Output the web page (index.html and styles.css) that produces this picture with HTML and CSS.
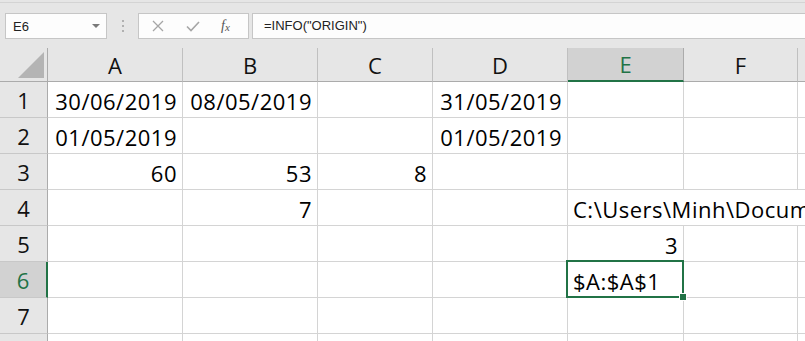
FILE: index.html
```html
<!DOCTYPE html>
<html lang="en">
<head>
    <meta charset="utf-8">
    <title>INFO ORIGIN</title>
    <link rel="stylesheet" href="styles.css">
</head>
<body>
<div class="toolbar">
    <div class="name-box">
        <span>E6</span>
        <span class="caret"></span>
    </div>
    <div class="grip"><i></i><i></i><i></i></div>
    <div class="fx-box">
        <svg width="14" height="14" viewBox="0 0 14 14"><path d="M2 2 L12 12 M12 2 L2 12" stroke="#a6a6a6" stroke-width="1.3" fill="none"/></svg>
        <svg width="16" height="14" viewBox="0 0 16 14"><path d="M2 7.5 L6 11.5 L14 3" stroke="#a6a6a6" stroke-width="1.6" fill="none"/></svg>
        <span class="fx">f<sub>x</sub></span>
    </div>
    <div class="formula">=INFO("ORIGIN")</div>
</div>

<div class="sheet">
    <div class="hdr corner"><span class="tri"></span></div>
    <div class="hdr col">A</div>
    <div class="hdr col">B</div>
    <div class="hdr col">C</div>
    <div class="hdr col">D</div>
    <div class="hdr col active">E</div>
    <div class="hdr col">F</div>
    <div class="hdr col"></div>

    <div class="hdr row">1</div>
    <div class="cell num">30/06/2019</div>
    <div class="cell num">08/05/2019</div>
    <div class="cell"></div>
    <div class="cell num">31/05/2019</div>
    <div class="cell"></div>
    <div class="cell"></div>
    <div class="cell"></div>

    <div class="hdr row">2</div>
    <div class="cell num">01/05/2019</div>
    <div class="cell"></div>
    <div class="cell"></div>
    <div class="cell num">01/05/2019</div>
    <div class="cell"></div>
    <div class="cell"></div>
    <div class="cell"></div>

    <div class="hdr row">3</div>
    <div class="cell num">60</div>
    <div class="cell num">53</div>
    <div class="cell num">8</div>
    <div class="cell"></div>
    <div class="cell"></div>
    <div class="cell"></div>
    <div class="cell"></div>

    <div class="hdr row">4</div>
    <div class="cell"></div>
    <div class="cell num">7</div>
    <div class="cell"></div>
    <div class="cell"></div>
    <div class="cell text span3">C:\Users\Minh\Docum</div>

    <div class="hdr row">5</div>
    <div class="cell"></div>
    <div class="cell"></div>
    <div class="cell"></div>
    <div class="cell"></div>
    <div class="cell num">3</div>
    <div class="cell"></div>
    <div class="cell"></div>

    <div class="hdr row active">6</div>
    <div class="cell"></div>
    <div class="cell"></div>
    <div class="cell"></div>
    <div class="cell"></div>
    <div class="cell text selected">$A:$A$1</div>
    <div class="cell"></div>
    <div class="cell"></div>

    <div class="hdr row">7</div>
    <div class="cell"></div>
    <div class="cell"></div>
    <div class="cell"></div>
    <div class="cell"></div>
    <div class="cell"></div>
    <div class="cell"></div>
    <div class="cell"></div>

    <div class="hdr row blank"></div>
    <div class="cell"></div>
    <div class="cell"></div>
    <div class="cell"></div>
    <div class="cell"></div>
    <div class="cell"></div>
    <div class="cell"></div>
    <div class="cell"></div>
</div>
</body>
</html>
```

FILE: styles.css
```css
body {
    margin: 0;
    background: #e6e6e6;
    font-family: "Liberation Sans", Arial, sans-serif;
    overflow: hidden;
}

.toolbar {
    display: flex;
    align-items: center;
    height: 46px;
    padding-left: 5px;
    border-top: 1px solid #d4d4d4;
    margin-top: 2px;
    box-sizing: border-box;
    padding-bottom: 9px;
    padding-top: 10px;
}

.name-box {
    display: flex;
    align-items: center;
    justify-content: space-between;
    width: 102px;
    height: 26px;
    box-sizing: border-box;
    background: #fdfdfd;
    border: 1px solid #c6c6c6;
    padding: 0 6px 0 7px;
    font-size: 13px;
    color: #222;
}

.caret {
    width: 0;
    height: 0;
    border-left: 4px solid transparent;
    border-right: 4px solid transparent;
    border-top: 4px solid #7a7a7a;
}

.grip {
    display: flex;
    flex-direction: column;
    gap: 3px;
    margin: 0 14px 0 15px;
}

.grip i {
    display: block;
    width: 2px;
    height: 2px;
    background: #b0b0b0;
}

.fx-box {
    display: flex;
    align-items: center;
    width: 111px;
    height: 26px;
    box-sizing: border-box;
    background: #fdfdfd;
    border: 1px solid #c6c6c6;
    padding-left: 12px;
    gap: 20px;
}

.fx {
    font-family: "Liberation Serif", serif;
    font-style: italic;
    font-size: 14px;
    color: #555;
}

.fx sub {
    font-size: 11px;
    vertical-align: -1px;
}

.formula {
    flex: 1;
    height: 26px;
    box-sizing: border-box;
    margin-left: 3px;
    background: #fdfdfd;
    border: 1px solid #c6c6c6;
    border-right: none;
    padding-left: 11px;
    line-height: 24px;
    font-size: 13px;
    color: #222;
}

.sheet {
    display: grid;
    grid-template-columns: 48px 135px 135px 115px 135px 116px 114px 1fr;
    grid-template-rows: 34px repeat(8, 36px);
    background: #fff;
    font-family: "Open Sans", "Liberation Sans", sans-serif;
}

.hdr {
    background: #e6e6e6;
    font-size: 22px;
    line-height: 26px;
    color: #111;
    display: flex;
    align-items: center;
    justify-content: center;
    box-sizing: border-box;
}

.hdr.col {
    border-right: 1px solid #c0c0c0;
    border-bottom: 1px solid #ababab;
}

.hdr.corner {
    border-right: 1px solid #ababab;
    border-bottom: 1px solid #ababab;
    position: relative;
}

.tri {
    position: absolute;
    right: 3px;
    bottom: 3px;
    width: 0;
    height: 0;
    border-left: 26px solid transparent;
    border-bottom: 26px solid #b4b4b4;
}

.hdr.row {
    border-right: 1px solid #ababab;
    border-bottom: 1px solid #c8c8c8;
    padding-top: 1px;
}

.hdr.col.active {
    background: #d2d2d2;
    color: #217346;
    border-bottom: 2px solid #217346;
    border-right-color: #ababab;
}

.hdr.row.active {
    background: #d2d2d2;
    color: #217346;
    border-right: 2px solid #217346;
}

.cell {
    box-sizing: border-box;
    border-right: 1px solid #d4d4d4;
    border-bottom: 1px solid #d4d4d4;
    font-size: 22px;
    letter-spacing: 0.5px;
    color: #000;
    display: flex;
    align-items: flex-end;
    padding: 0 5px 3px 5px;
    line-height: 26px;
    white-space: nowrap;
    overflow: hidden;
}

.cell.num {
    justify-content: flex-end;
}

.cell.span3 {
    grid-column: span 3;
    border-right: none;
}

.cell.selected {
    position: relative;
    overflow: visible;
}

.cell.selected::after {
    content: "";
    position: absolute;
    left: -2px;
    top: -2px;
    right: -1px;
    bottom: -1px;
    border: 2px solid #217346;
}

.cell.selected::before {
    content: "";
    position: absolute;
    right: -4px;
    bottom: -4px;
    width: 6px;
    height: 6px;
    background: #217346;
    border: 1px solid #fff;
    z-index: 1;
}
```
